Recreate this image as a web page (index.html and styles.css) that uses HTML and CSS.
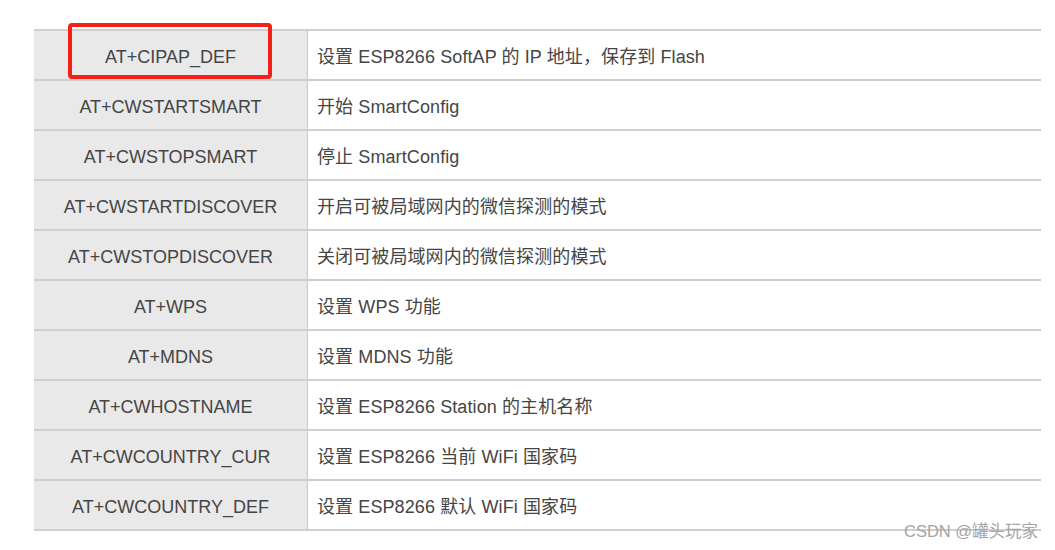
FILE: index.html
```html
<!DOCTYPE html>
<html lang="zh">
<head>
<meta charset="utf-8">
<link rel="stylesheet" href="styles.css">
</head>
<body>
<div class="page">
  <table class="cmds">
    <tbody>
      <tr><td class="cmd">AT+CIPAP_DEF</td><td class="desc">设置 ESP8266 SoftAP 的 IP 地址，保存到 Flash</td></tr>
      <tr><td class="cmd">AT+CWSTARTSMART</td><td class="desc">开始 SmartConfig</td></tr>
      <tr><td class="cmd">AT+CWSTOPSMART</td><td class="desc">停止 SmartConfig</td></tr>
      <tr><td class="cmd">AT+CWSTARTDISCOVER</td><td class="desc">开启可被局域网内的微信探测的模式</td></tr>
      <tr><td class="cmd">AT+CWSTOPDISCOVER</td><td class="desc">关闭可被局域网内的微信探测的模式</td></tr>
      <tr><td class="cmd">AT+WPS</td><td class="desc">设置 WPS 功能</td></tr>
      <tr><td class="cmd">AT+MDNS</td><td class="desc">设置 MDNS 功能</td></tr>
      <tr><td class="cmd">AT+CWHOSTNAME</td><td class="desc">设置 ESP8266 Station 的主机名称</td></tr>
      <tr><td class="cmd">AT+CWCOUNTRY_CUR</td><td class="desc">设置 ESP8266 当前 WiFi 国家码</td></tr>
      <tr><td class="cmd">AT+CWCOUNTRY_DEF</td><td class="desc">设置 ESP8266 默认 WiFi 国家码</td></tr>
    </tbody>
  </table>
  <div class="highlight"></div>
  <div class="watermark">CSDN @罐头玩家</div>
</div>
</body>
</html>
```
FILE: styles.css
```css
html, body {
  margin: 0;
  padding: 0;
  background: #ffffff;
}
.page {
  position: relative;
  width: 1055px;
  height: 550px;
  padding: 29px 0 0 34px;
  box-sizing: border-box;
  font-family: "Liberation Sans", "Noto Sans CJK SC", sans-serif;
  color: #454545;
}
.cmds {
  border-collapse: collapse;
  width: 1007px;
  table-layout: fixed;
  font-size: 18px;
  line-height: 22px;
}
.cmds tr {
  height: 50px;
}
.cmds td {
  border-top: 2px solid #cfcfcf;
  border-bottom: 2px solid #cfcfcf;
  padding: 3px 0 0 0;
  vertical-align: middle;
  white-space: nowrap;
}
.cmd {
  width: 273px;
  background: #e9e9e9;
  text-align: center;
  border-right: 1px solid #c8c8c8;
}
.cmds td.desc {
  padding-left: 9px;
  background: #ffffff;
  letter-spacing: 0.1px;
}
.highlight {
  position: absolute;
  left: 68px;
  top: 23px;
  width: 204px;
  height: 56px;
  box-sizing: border-box;
  border: 4px solid #f5201a;
  border-radius: 4px;
}
.watermark {
  position: absolute;
  left: 904px;
  top: 521px;
  font-size: 16.5px;
  color: #a5a5a5;
  font-family: "Liberation Sans", "Noto Sans CJK SC", sans-serif;
  line-height: 20px;
}
```
